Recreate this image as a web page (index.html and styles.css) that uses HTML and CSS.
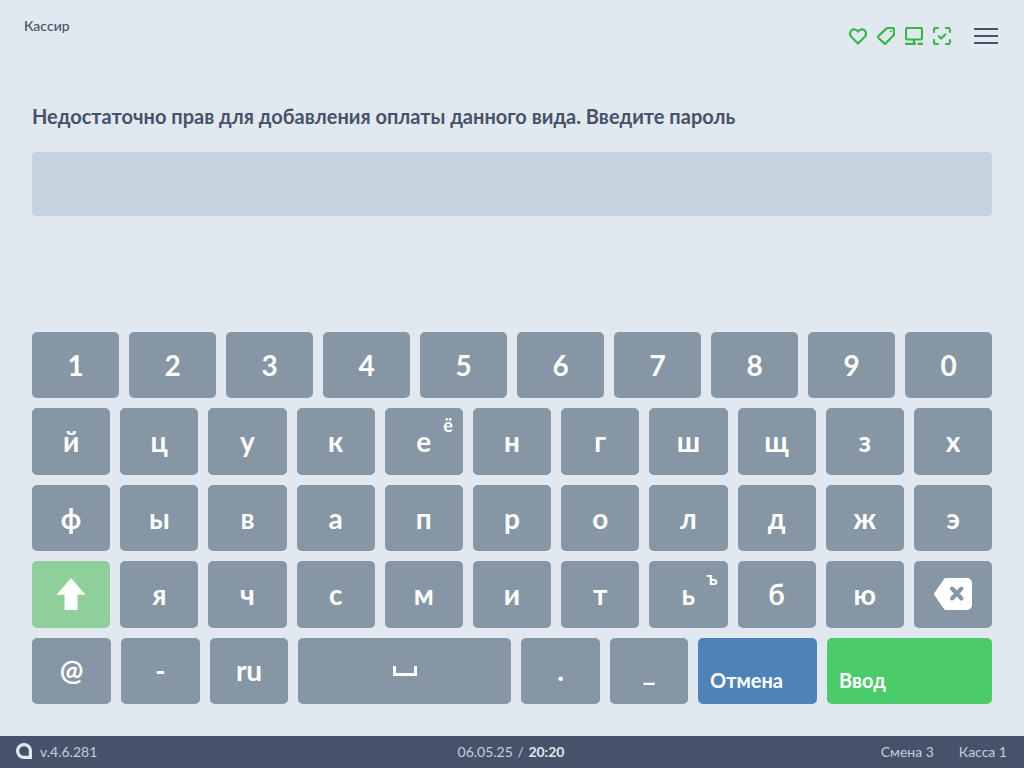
FILE: index.html
```html
<!DOCTYPE html>
<html lang="ru">
<head>
<meta charset="utf-8">
<title>Кассир</title>
<link rel="stylesheet" href="styles.css">
</head>
<body>
<div class="app">
  <header class="top">
    <div class="role">Кассир</div>
    <div class="tools">
      <svg class="ico" viewBox="0 0 18 18"><path d="M9 16.500 2.200 9.800C.4 7.900.7 4.800 2.700 3.200 4.700 1.700 7.500 2.300 9 4.700c1.500-2.400 4.300-3 6.300-1.500 2 1.600 2.300 4.700.5 6.600z"/></svg>
      <svg class="ico" viewBox="0 0 18 18"><path d="M10.800 1h4.700A1.500 1.500 0 0 1 17 2.500v4.700a2 2 0 0 1-.6 1.400l-7.300 7.500a1.500 1.500 0 0 1-2.100 0L1.500 11a1.500 1.500 0 0 1 0-2.100l7.900-7.300a2 2 0 0 1 1.400-.6z"/><circle class="dot" cx="13.700" cy="4.300" r=".5"/></svg>
      <svg class="ico" viewBox="0 0 18 18"><rect x="1" y="1" width="16" height="11.500" rx="1.500"/><path class="butt" d="M9 12.500v4M0 16.800h11M12.500 16.800H18"/></svg>
      <svg class="ico" viewBox="0 0 18 18"><path d="M5 1H3a2 2 0 0 0-2 2v2M13 1h2a2 2 0 0 1 2 2v2M5 17H3a2 2 0 0 1-2-2v-2M13 17h2a2 2 0 0 0 2-2v-2M5.800 9.200l2.300 2.300 4.100-4.100"/></svg>
      <div class="burger"><span></span><span></span><span></span></div>
    </div>
  </header>
  <main class="content">
    <h1 class="title">Недостаточно прав для добавления оплаты данного вида. Введите пароль</h1>
    <div class="field"></div>
    <div class="kbd">
      <div class="row">
        <div class="key">1</div><div class="key">2</div><div class="key">3</div><div class="key">4</div><div class="key">5</div><div class="key">6</div><div class="key">7</div><div class="key">8</div><div class="key">9</div><div class="key">0</div>
      </div>
      <div class="row">
        <div class="key">й</div><div class="key">ц</div><div class="key">у</div><div class="key">к</div><div class="key">е<span class="alt">ё</span></div><div class="key">н</div><div class="key">г</div><div class="key">ш</div><div class="key">щ</div><div class="key">з</div><div class="key">х</div>
      </div>
      <div class="row">
        <div class="key">ф</div><div class="key">ы</div><div class="key">в</div><div class="key">а</div><div class="key">п</div><div class="key">р</div><div class="key">о</div><div class="key">л</div><div class="key">д</div><div class="key">ж</div><div class="key">э</div>
      </div>
      <div class="row">
        <div class="key shift"><svg class="arrow" viewBox="0 0 30 32"><path d="M15 0 29.500 16.700H21.500V32H8.500V16.700H.5z"/></svg></div>
        <div class="key">я</div><div class="key">ч</div><div class="key">с</div><div class="key">м</div><div class="key">и</div><div class="key">т</div><div class="key">ь<span class="alt">ъ</span></div><div class="key">б</div><div class="key">ю</div>
        <div class="key"><svg class="back" viewBox="0 0 38 32"><path class="back-body" d="M12 0H33a5 5 0 0 1 5 5V27a5 5 0 0 1-5 5H12a3 3 0 0 1-2-1L1 18a3 3 0 0 1 0-4L10 1a3 3 0 0 1 2-1z"/><path class="back-x" d="M18 10.500 27.500 20.500M27.500 10.500 18 20.500"/></svg></div>
      </div>
      <div class="row last">
        <div class="key">@</div><div class="key">-</div><div class="key">ru</div>
        <div class="key"><span class="space"></span></div>
        <div class="key">.</div><div class="key">_</div>
        <div class="key action cancel">Отмена</div>
        <div class="key action enter">Ввод</div>
      </div>
    </div>
  </main>
  <footer class="bar">
    <div class="ver"><svg class="logo" viewBox="0 0 16 16"><path d="M14.400 14.400H8A6.400 6.400 0 1 1 14.400 8z"/></svg>v.4.6.281</div>
    <div class="date">06.05.25 <span class="slash">/</span> <b>20:20</b></div>
    <div class="info"><span>Смена 3</span><span>Касса 1</span></div>
  </footer>
</div>
</body>
</html>
```
FILE: styles.css
```css
* { box-sizing: border-box; }
html, body { margin: 0; padding: 0; }
body { font-family: Lato, "Noto Sans", sans-serif; background: #e1e8f0; color: #465269; }
.app { width: 1024px; height: 768px; display: flex; flex-direction: column; overflow: hidden; }
.top { height: 66px; display: flex; justify-content: space-between; padding: 17px 26px 0 24px; flex: none; }
.role { font-size: 14px; font-weight: 500; line-height: 18px; }
.tools { display: flex; align-items: flex-start; gap: 10px; padding-top: 10px; }
.ico { width: 18px; height: 18px; fill: none; stroke: #3ab54a; stroke-width: 2.2; stroke-linecap: round; stroke-linejoin: round; }
.ico .butt { stroke-linecap: butt; }
.ico .dot { fill: #3ab54a; stroke-width: 1; }
.burger { width: 24px; margin-left: 13px; padding-top: 1px; display: flex; flex-direction: column; gap: 5px; }
.burger span { height: 2px; background: #465269; display: block; }
.content { flex: 1; padding: 0 32px 32px; display: flex; flex-direction: column; min-height: 0; }
.title { margin: 37px 0 0; font-size: 20px; line-height: 26px; font-weight: 700; }
.field { height: 64px; margin-top: 23px; border-radius: 4px; background: #c6d2de; flex: none; }
.kbd { margin-top: auto; height: 372px; display: flex; flex-direction: column; gap: 10px; }
.row { flex: 1; display: flex; gap: 10px; min-height: 0; }
.last { display: grid; grid-template-columns: 79px 79px 78px 213px 79px 78px 119px 165px; }
.key { position: relative; flex: 1 1 0; min-width: 0; display: flex; align-items: center; justify-content: center; padding-bottom: 1px; background: #8796a5; border-radius: 5px; color: #fff; font-size: 28px; font-weight: 700; line-height: 1; }
.alt { position: absolute; top: 8px; right: 10px; font-size: 18px; font-weight: 700; }
.shift { background: #8fcf9b; padding-bottom: 0; }
.arrow { width: 30px; height: 32px; fill: #fff; }
.back { width: 38px; height: 32px; }
.back-body { fill: #fff; }
.back-x { fill: none; stroke: #8796a5; stroke-width: 4; stroke-linecap: round; }
.space { width: 24px; height: 10px; margin-top: 1px; border: solid #fff; border-width: 0 3px 3px; }
.action { justify-content: flex-start; align-items: flex-end; padding: 0 12px 11px; font-size: 20px; line-height: 26px; font-weight: 700; }
.cancel { background: #4e83b8; }
.enter { background: #4bcb69; }
.bar { height: 32px; flex: none; background: #465269; color: #c3cfdc; font-size: 14px; display: grid; grid-template-columns: 1fr auto 1fr; align-items: center; padding: 0 17px 2px 16px; }
.ver { display: flex; align-items: center; gap: 8px; }
.logo { width: 16px; height: 16px; fill: none; stroke: #e1e8f0; stroke-width: 3.2; }
.slash { margin: 0 1px; }
.date { padding-right: 1px; }
.date b { font-weight: 700; color: #e1e8f0; }
.info { display: flex; justify-content: flex-end; gap: 25px; }
```
